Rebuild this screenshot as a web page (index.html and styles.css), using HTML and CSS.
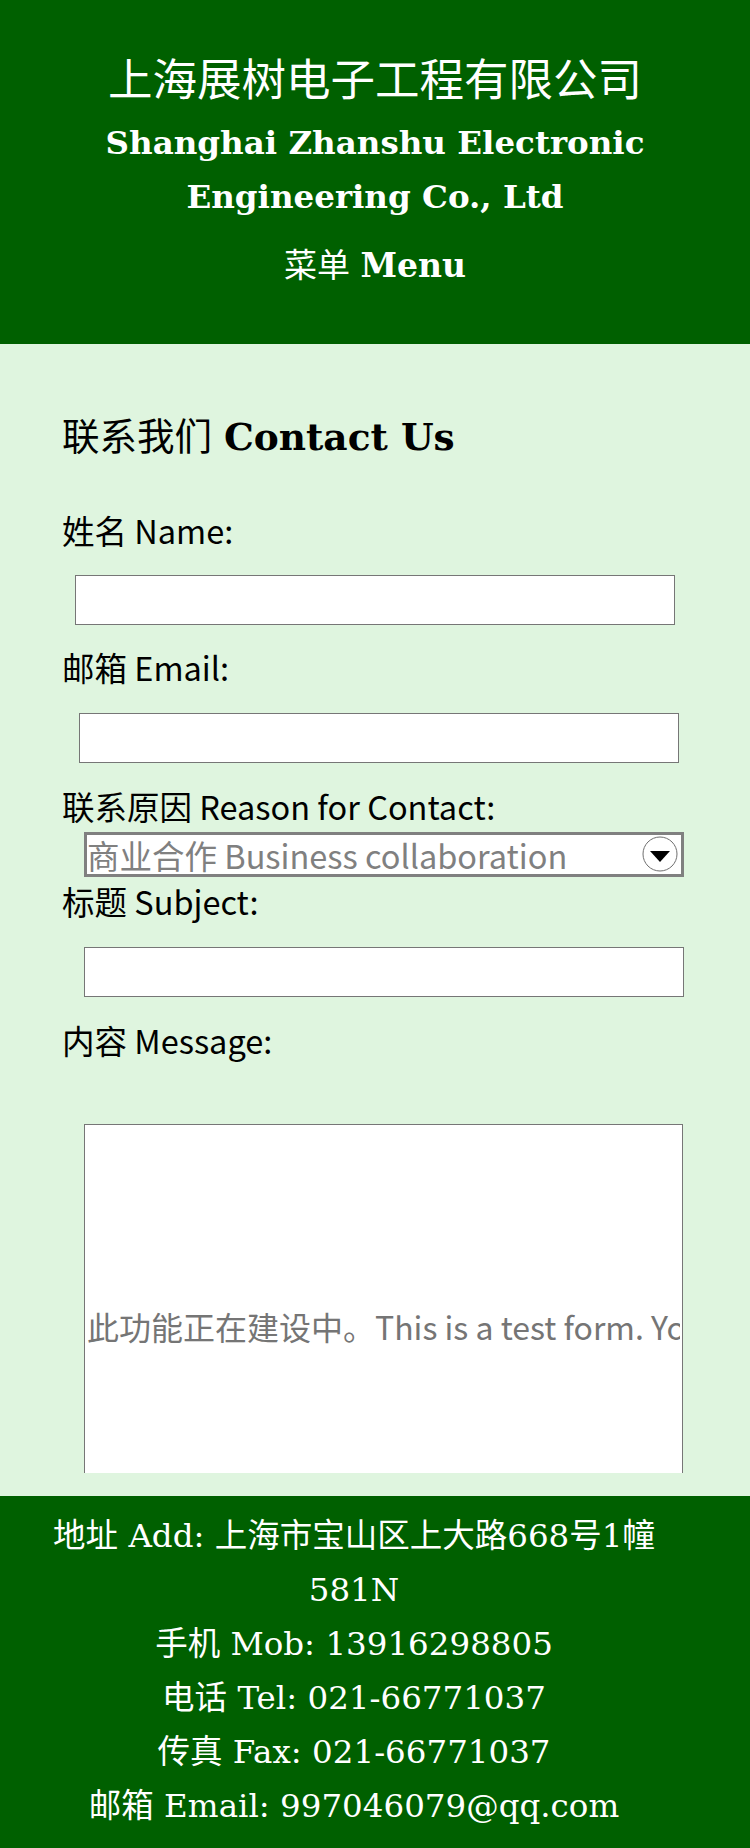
FILE: index.html
```html
<!DOCTYPE html>
<html lang="zh-CN">
<head>
<meta charset="utf-8">
<title>联系我们 Contact Us - 上海展树电子工程有限公司</title>
<link rel="stylesheet" href="styles.css">
</head>
<body>
<header class="site-header">
  <h1 class="company-cn">上海展树电子工程有限公司</h1>
  <p class="company-en">Shanghai Zhanshu Electronic Engineering Co., Ltd</p>
  <nav class="menu">菜单 <b>Menu</b></nav>
</header>

<main class="contact">
  <div class="contact-clip">
    <h2 class="contact-title">联系我们 <b>Contact Us</b></h2>
    <form class="contact-form">
      <label class="field-label label-name" for="name">姓名 Name:</label>
      <input class="field field-name" id="name" type="text">

      <label class="field-label label-email" for="email">邮箱 Email:</label>
      <input class="field field-email" id="email" type="email">

      <label class="field-label label-reason" for="reason">联系原因 Reason for Contact:</label>
      <div class="select-wrap">
        <select class="field-select" id="reason">
          <option>商业合作 Business collaboration</option>
          <option>技术支持 Technical support</option>
          <option>其他 Other</option>
        </select>
        <svg class="select-arrow" width="36" height="36" viewBox="0 0 36 36" aria-hidden="true">
          <circle cx="18" cy="18" r="17" fill="#fff" stroke="#6f6f6f" stroke-width="1"/>
          <path d="M8 15 L28 15 L18 26 Z" fill="#000"/>
        </svg>
      </div>

      <label class="field-label label-subject" for="subject">标题 Subject:</label>
      <input class="field field-subject" id="subject" type="text">

      <label class="field-label label-message" for="message">内容 Message:</label>
      <input class="field field-message" id="message" type="text" placeholder="此功能正在建设中。This is a test form. Your message will not be sent.">
    </form>
  </div>
</main>

<footer class="site-footer">
  <p>地址 Add: 上海市宝山区上大路668号1幢<br>581N</p>
  <p>手机 Mob: 13916298805</p>
  <p>电话 Tel: 021-66771037</p>
  <p>传真 Fax: 021-66771037</p>
  <p>邮箱 Email: 997046079@qq.com</p>
</footer>
</body>
</html>
```

FILE: styles.css
```css
* {
  box-sizing: border-box;
}

body {
  margin: 0;
  background: #dff5df;
  font-family: "DejaVu Serif", "Noto Sans CJK SC", serif;
  color: #000;
}

/* ---------- header ---------- */
.site-header {
  height: 344px;
  background: #006000;
  color: #fff;
  text-align: center;
  padding-top: 49px;
}

.company-cn {
  margin: 0;
  font-family: "Noto Sans CJK SC", sans-serif;
  font-weight: 400;
  font-size: 44.5px;
  line-height: 56px;
}

.company-en {
  margin: 11px 0 0;
  font-family: "DejaVu Serif", serif;
  font-weight: 700;
  font-size: 32.5px;
  line-height: 54px;
}

.menu {
  margin-top: 15px;
  font-family: "DejaVu Serif", "Noto Sans CJK SC", serif;
  font-size: 33px;
  line-height: 54px;
}

.menu b {
  font-weight: 700;
}

/* ---------- contact ---------- */
.contact {
  padding-bottom: 23px;
}

.contact-clip {
  height: 1129px;
  overflow: hidden;
  padding: 67px 0 0 62px;
}

.contact-title {
  margin: 0;
  font-family: "DejaVu Serif", "Noto Sans CJK SC", serif;
  font-weight: 400;
  font-size: 37.5px;
  line-height: 52px;
}

.contact-title b {
  font-weight: 700;
}

.contact-form {
  display: flex;
  flex-direction: column;
  align-items: flex-start;
}

.field-label {
  display: block;
  font-family: "Noto Sans CJK SC", sans-serif;
  font-size: 32.5px;
  line-height: 44px;
  color: #000;
}

.label-name { margin-top: 45px; }
.label-email { margin-top: 20px; }
.label-reason { margin-top: 21px; }
.label-subject { margin-top: 2px; }
.label-message { margin-top: 21px; }

.field {
  display: block;
  width: 600px;
  height: 50px;
  border: 1px solid #767676;
  background: #fff;
  padding: 1px 2px;
  margin: 24px 0 0;
  font-family: "Noto Sans CJK SC", sans-serif;
  font-size: 32px;
  border-radius: 0;
}

.field-name { margin-top: 23px; margin-left: 13px; }
.field-email { margin-left: 17px; }
.field-subject { margin-left: 22px; }

.field-message {
  margin: 62px 0 0 22px;
  width: 599px;
  height: 404px;
  font-size: 32px;
}

.field-message::placeholder {
  color: #757575;
}

.select-wrap {
  position: relative;
  margin: 4px 0 0 22px;
  width: 600px;
  height: 45px;
}

.field-select {
  appearance: none;
  -webkit-appearance: none;
  width: 600px;
  height: 45px;
  border: 3px solid #808080;
  border-radius: 0;
  background: #fff;
  padding: 0;
  font-family: "Noto Sans CJK SC", sans-serif;
  font-size: 32.5px;
  line-height: 39px;
  color: #808080;
}

.select-arrow {
  position: absolute;
  right: 6px;
  top: 4px;
  pointer-events: none;
}

/* ---------- footer ---------- */
.site-footer {
  height: 352px;
  background: #006000;
  color: #fff;
  text-align: center;
  padding: 13px 42px 0 0;
  font-family: "DejaVu Serif", "Noto Sans CJK SC", serif;
  font-size: 32.5px;
  line-height: 54px;
}

.site-footer p {
  margin: 0;
}
```
